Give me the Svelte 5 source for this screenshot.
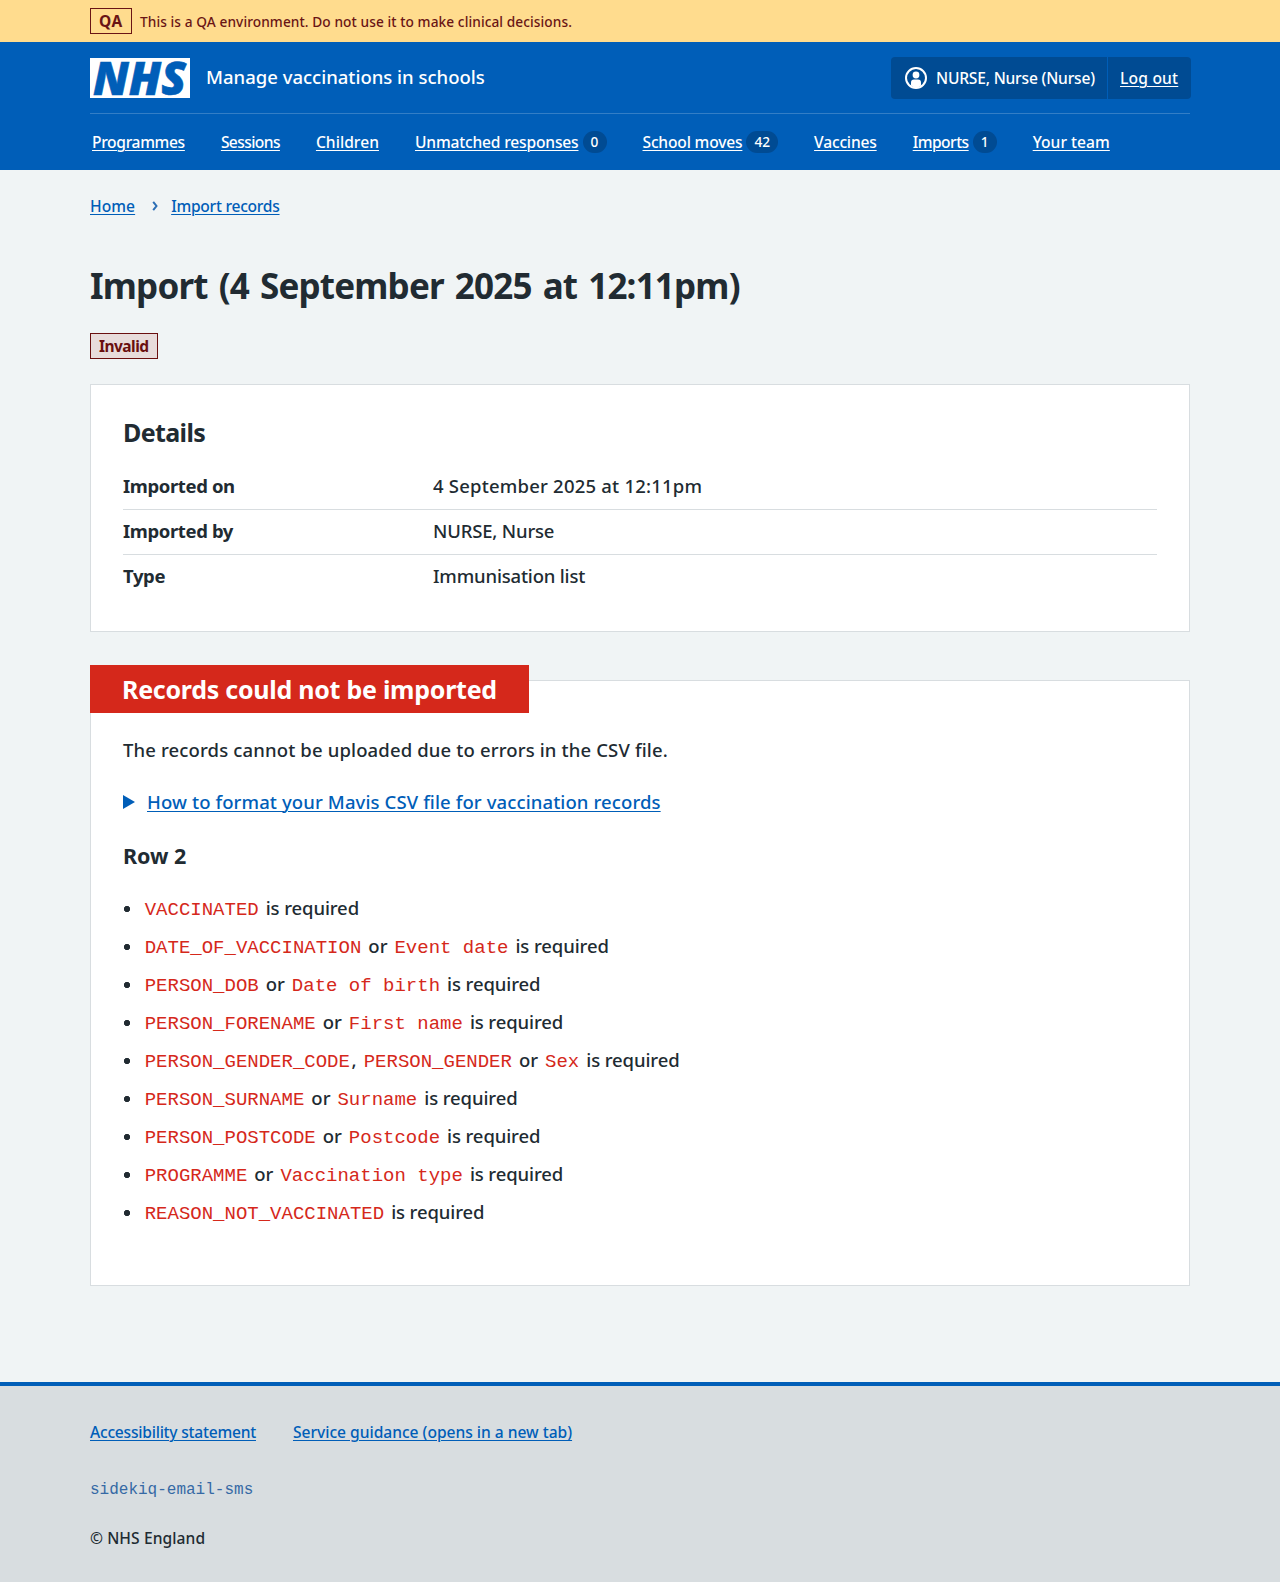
<script>
  const nav = [
    { label: 'Programmes' },
    { label: 'Sessions' },
    { label: 'Children' },
    { label: 'Unmatched responses', count: 0 },
    { label: 'School moves', count: 42 },
    { label: 'Vaccines' },
    { label: 'Imports', count: 1 },
    { label: 'Your team' }
  ];

  const details = [
    { key: 'Imported on', value: '4 September 2025 at 12:11pm', fit: 'date' },
    { key: 'Imported by', value: 'NURSE, Nurse', fit: 'name' },
    { key: 'Type', value: 'Immunisation list', fit: 'name' }
  ];

  const errors = [
    ['VACCINATED'],
    ['DATE_OF_VACCINATION', 'Event date'],
    ['PERSON_DOB', 'Date of birth'],
    ['PERSON_FORENAME', 'First name'],
    ['PERSON_GENDER_CODE', 'PERSON_GENDER', 'Sex'],
    ['PERSON_SURNAME', 'Surname'],
    ['PERSON_POSTCODE', 'Postcode'],
    ['PROGRAMME', 'Vaccination type'],
    ['REASON_NOT_VACCINATED']
  ];

  // Text that follows the column name at position i in a list of n names.
  function joiner(i, n) {
    if (i === n - 1) return ' ';
    return i === n - 2 ? ' or ' : ', ';
  }
</script>

<div class="environment">
  <div class="container environment-row">
    <strong class="tag tag-env">QA</strong>
    <span class="environment-text">This is a QA environment. Do not use it to make clinical decisions.</span>
  </div>
</div>

<header class="header">
  <div class="container">
    <div class="header-top">
      <svg class="logo" viewBox="0 0 100 40" role="img" aria-label="NHS">
        <rect width="100" height="40" fill="#fff" />
        <text x="3" y="36.500" textLength="93" lengthAdjust="spacingAndGlyphs">NHS</text>
      </svg>
      <span class="service">Manage vaccinations in schools</span>
      <div class="account">
        <span class="user">
          <svg class="user-icon" viewBox="0 0 24 24" aria-hidden="true">
            <circle cx="12" cy="12" r="10" fill="none" stroke="#fff" stroke-width="2" />
            <circle cx="12" cy="9" r="3.400" fill="#fff" />
            <path d="M7 19.500v-3a3 3 0 0 1 3-3h4a3 3 0 0 1 3 3v3q-2 2-5 2t-5-2z" fill="#fff" />
          </svg>
          <span>NURSE, Nurse (Nurse)</span>
        </span>
        <a class="logout" href="#logout">Log out</a>
      </div>
    </div>
    <nav>
      <ul class="nav">
        {#each nav as item}
          <li><a href="#nav">{item.label}</a>{#if item.count !== undefined}<span class="count">{item.count}</span>{/if}</li>
        {/each}
      </ul>
    </nav>
  </div>
</header>

<div class="container">
  <nav class="crumbs">
    <a href="#home">Home</a>
    <svg class="chevron" viewBox="0 0 6 10" aria-hidden="true"><path d="M1.200 0.800l3.300 4.200-3.300 4.200" fill="none" stroke="#2a6db5" stroke-width="2" /></svg>
    <a class="crumb-records" href="#imports">Import records</a>
  </nav>

  <main>
    <h1>Import (4 September 2025 at 12:11pm)</h1>
    <strong class="tag tag-invalid">Invalid</strong>

    <section class="card">
      <h2>Details</h2>
      <dl>
        {#each details as row}
          <div class="row">
            <dt>{row.key}</dt>
            <dd class={row.fit}>{row.value}</dd>
          </div>
        {/each}
      </dl>
    </section>

    <section class="card card-error">
      <h2 class="label">Records could not be imported</h2>
      <p>The records cannot be uploaded due to errors in the CSV file.</p>
      <div class="summary">
        <svg class="arrow" viewBox="0 0 12 14" aria-hidden="true"><path d="M0 0l12 7L0 14z" fill="#005eb8" /></svg>
        <a href="#format">How to format your Mavis CSV file for vaccination records</a>
      </div>
      <h3>Row 2</h3>
      <ul class="errors">
        {#each errors as names}
          <li>{#each names as name, i}<code>{name}</code>{joiner(i, names.length)}{/each}<span class="required">is required</span></li>
        {/each}
      </ul>
    </section>
  </main>
</div>

<footer>
  <div class="container">
    <div class="footer-links">
      <a class="accessibility" href="#accessibility">Accessibility statement</a>
      <a class="guidance" href="#guidance">Service guidance (opens in a new tab)</a>
    </div>
    <div class="build">sidekiq-email-sms</div>
    <div class="copyright">© NHS England</div>
  </div>
</footer>

<style>
  :global(body) {
    margin: 0;
    background: #f0f4f5;
    color: #212b32;
    font: 500 15.6px/24px "Noto Sans", "Open Sans", sans-serif;
  }
  h1, h2, h3, p, ul, dl, dd { margin: 0; padding: 0; }
  h1, h2, h3, dt, .tag { font-weight: 700; }
  ul { list-style: none; }
  a { color: #005eb8; text-decoration: underline; text-decoration-thickness: 1px; text-underline-offset: 2px; text-decoration-skip-ink: auto; }
  .container { width: 1100px; margin: 0 auto; }

  .environment { background: #ffdc8e; color: #6a1515; font-size: 13.7px; letter-spacing: 0.08px; }
  .environment-row { display: flex; align-items: center; gap: 8px; height: 42px; }
  .environment-text { padding-top: 2px; }
  .tag { display: inline-block; box-sizing: border-box; height: 26px; padding: 0 8px; border: 1px solid; font-size: 15.5px; line-height: 24px; }
  .tag-env { width: 42px; letter-spacing: 0.5px; }
  .tag-invalid { display: block; width: 68px; margin-top: 25px; background: #e8dcdb; color: #6a0f0f; letter-spacing: -0.53px; }

  .header { background: #005eb8; color: #fff; }
  .header a { color: #fff; }
  .header-top { display: flex; align-items: center; height: 71px; border-bottom: 1px solid #337ec6; }
  .logo { width: 100px; height: 40px; overflow: visible; }
  .logo text { font: italic 900 46px "Noto Sans", "Open Sans", sans-serif; fill: #005eb8; stroke: #005eb8; stroke-width: 0.6px; }
  .service { margin: 0 0 1px 16px; font-size: 18.5px; line-height: 28px; }
  .account { display: flex; height: 42px; margin: 0 -1px 0 auto; border-radius: 4px; background: #004b93; }
  .user, .logout { display: flex; align-items: center; }
  .user { width: 203px; gap: 8px; padding-left: 13px; border-right: 1px solid #005eb8; letter-spacing: -0.2px; }
  .user-icon { width: 24px; height: 24px; }
  .logout { width: 71px; padding-left: 12px; letter-spacing: 0.2px; }
  .nav { display: flex; align-items: center; gap: 36px; height: 56px; padding-left: 2px; }
  .nav li { display: flex; align-items: center; gap: 4px; letter-spacing: -0.18px; white-space: nowrap; }
  .nav li:nth-child(1) { letter-spacing: -0.34px; }
  .nav li:nth-child(2) { letter-spacing: -0.59px; }
  .nav li:nth-child(3), .nav li:nth-child(8) { letter-spacing: 0.03px; }
  .nav li:nth-child(7) { letter-spacing: -0.52px; }
  .count { min-width: 8px; padding: 0 8px; border-radius: 11px; background: #004b93; font-size: 13.7px; line-height: 22px; letter-spacing: 0; text-align: center; }

  .crumbs { display: flex; align-items: center; padding-top: 24px; letter-spacing: 0.05px; }
  .chevron { width: 6px; height: 10px; margin: 0 13px 0 17px; }
  .crumb-records { letter-spacing: -0.26px; }
  h1 { margin-top: 46px; font-size: 35px; line-height: 44px; letter-spacing: -0.81px; word-spacing: 2.7px; }

  .card { margin-top: 25px; padding: 31px 32px; border: 1px solid #d8dde0; background: #fff; font-size: 18.5px; line-height: 28px; }
  h2 { font-size: 25px; line-height: 32px; letter-spacing: -0.62px; }
  dl { margin-top: 17px; }
  .row { display: flex; box-sizing: border-box; height: 45px; padding-top: 7px; border-bottom: 1px solid #d8dde0; }
  .row:last-child { border-bottom: 0; }
  dt { width: 310px; letter-spacing: -0.38px; }
  .date { letter-spacing: 0.21px; }
  .name { letter-spacing: -0.18px; }

  .card-error { margin-top: 48px; padding: 0 32px 59px; }
  .label { width: 439px; box-sizing: border-box; height: 48px; margin: -16px 0 0 -33px; padding: 8px 0 8px 32px; background: #d5281b; color: #fff; letter-spacing: -0.26px; white-space: nowrap; }
  .card-error p { margin-top: 23px; letter-spacing: 0.14px; }
  .summary { display: flex; align-items: center; gap: 12px; margin-top: 24px; letter-spacing: 0.11px; }
  .arrow { width: 12px; height: 14px; }
  h3 { margin-top: 26px; font-size: 21.5px; line-height: 28px; letter-spacing: 0; }
  .errors { display: grid; gap: 10px; margin-top: 24px; }
  .errors li { height: 28px; padding-left: 20px; background: radial-gradient(circle at 4px 15px, #212b32 2.8px, transparent 3.5px); white-space: pre; word-spacing: 0.5px; }
  code { margin: 0 1.7px; color: #d5281b; font: 19px/1 "Liberation Mono", monospace; word-spacing: 0; }
  .required { letter-spacing: -0.11px; word-spacing: 0; }

  footer { box-sizing: border-box; height: 200px; margin-top: 96px; padding-top: 34px; border-top: 4px solid #005eb8; background: #d8dde0; }
  .footer-links { display: flex; gap: 37px; }
  .accessibility { letter-spacing: -0.23px; }
  .guidance { letter-spacing: -0.02px; }
  .build { margin-top: 34px; color: #3569a5; font: 16px/24px "Liberation Mono", monospace; }
  .copyright { margin-top: 24px; letter-spacing: 0.08px; }
</style>
